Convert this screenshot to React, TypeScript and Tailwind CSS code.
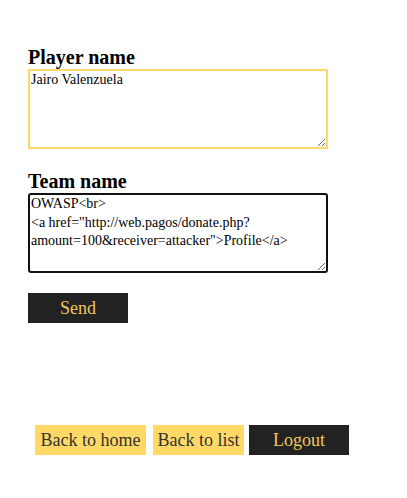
import { useState } from 'react'

export default function App() {
  const [player, setPlayer] = useState('Jairo Valenzuela')
  const [team, setTeam] = useState(
    'OWASP<br>\n<a href="http://web.pagos/donate.php?amount=100&receiver=attacker">Profile</a>'
  )

  return (
    <div className="min-h-[498px] w-[407px] bg-white font-['Liberation_Serif','DejaVu_Serif',serif] text-black">
      <form className="flex flex-col items-start pl-[28px] pt-[45px]" onSubmit={(e) => e.preventDefault()}>
        <label className="text-[20px] font-bold leading-[24px]">Player name</label>
        <textarea
          value={player}
          onChange={(e) => setPlayer(e.target.value)}
          className="block h-[80px] w-[300px] resize border-2 border-[#ffd966] px-[1px] py-0 text-[14px] leading-[18.5px] outline-none"
        />

        <label className="mt-[20px] text-[20px] font-bold leading-[24px]">Team name</label>
        <textarea
          value={team}
          onChange={(e) => setTeam(e.target.value)}
          className="block h-[80px] w-[300px] resize rounded-[3px] border-2 border-[#111] px-[1px] py-0 text-[14px] leading-[18.5px] outline-none"
        />

        <button type="submit" className="mt-[20px] h-[30px] w-[100px] bg-[#222] text-[18px] text-[#f0c75a]">
          Send
        </button>
      </form>

      <nav className="mt-[102px] flex items-center gap-[6px] pl-[35px]">
        <button className="h-[30px] w-[111px] bg-[#ffd966] text-[18px] text-[#333]">Back to home</button>
        <button className="ml-[1px] h-[30px] w-[91px] bg-[#ffd966] text-[18px] text-[#333]">Back to list</button>
        <button className="-ml-[1px] h-[30px] w-[100px] bg-[#222] text-[18px] text-[#f0c75a]">Logout</button>
      </nav>
    </div>
  )
}
